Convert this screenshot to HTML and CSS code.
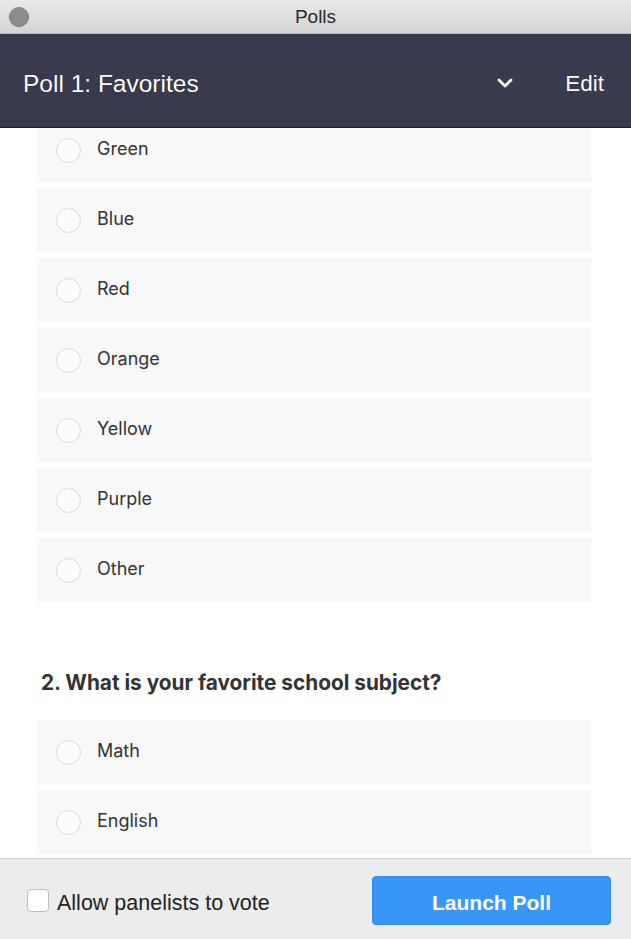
FILE: index.html
```html
<!DOCTYPE html>
<html lang="en">
<head>
<meta charset="utf-8">
<title>Polls</title>
<link rel="stylesheet" href="styles.css">
</head>
<body>
<div class="window">
  <div class="titlebar">
    <span class="dot"></span>
    <span class="wintitle">Polls</span>
  </div>
  <div class="header">
    <div class="poll-title">Poll 1: Favorites</div>
    <svg class="chev" width="18" height="12" viewBox="0 0 18 12"><polyline points="3,3 9,9 15,3" fill="none" stroke="#fff" stroke-width="2.8" stroke-linecap="round" stroke-linejoin="round"/></svg>
    <div class="edit">Edit</div>
  </div>
  <div class="content">
    <div class="list first">
      <div class="opt"><span class="radio"></span><span class="label">Green</span></div>
      <div class="opt"><span class="radio"></span><span class="label">Blue</span></div>
      <div class="opt"><span class="radio"></span><span class="label">Red</span></div>
      <div class="opt"><span class="radio"></span><span class="label">Orange</span></div>
      <div class="opt"><span class="radio"></span><span class="label">Yellow</span></div>
      <div class="opt"><span class="radio"></span><span class="label">Purple</span></div>
      <div class="opt"><span class="radio"></span><span class="label">Other</span></div>
    </div>
    <div class="question">2. What is your favorite school subject?</div>
    <div class="list">
      <div class="opt"><span class="radio"></span><span class="label">Math</span></div>
      <div class="opt"><span class="radio"></span><span class="label">English</span></div>
    </div>
  </div>
  <div class="footer">
    <div class="allow"><span class="checkbox"></span><span class="allow-text">Allow panelists to vote</span></div>
    <button class="launch">Launch Poll</button>
  </div>
</div>
</body>
</html>
```

FILE: styles.css
```css
* { box-sizing: border-box; }
html, body { margin: 0; padding: 0; }
body {
  font-family: Inter, "Liberation Sans", Arial, sans-serif;
  background: #fff;
}
.window {
  width: 631px;
  height: 939px;
  display: flex;
  flex-direction: column;
  overflow: hidden;
}
.titlebar {
  height: 34px;
  flex: none;
  display: flex;
  align-items: center;
  justify-content: center;
  position: relative;
  background: linear-gradient(#e9e9e9, #d4d4d4);
  border-bottom: 1px solid #b9b9b9;
}
.dot {
  position: absolute;
  left: 9px;
  top: 7px;
  width: 20px;
  height: 20px;
  border-radius: 50%;
  background: #8c8c8c;
  border: 1px solid #7a7a7a;
}
.wintitle {
  font-family: "Liberation Sans", Arial, sans-serif;
  font-size: 19px;
  color: #2a2a2a;
  padding-top: 1px;
}
.header {
  height: 94px;
  flex: none;
  background: #3a3a4e;
  border-bottom: 1px solid #1c1c24;
  display: flex;
  align-items: center;
  padding: 7px 27px 0 23px;
  color: #fff;
}
.poll-title {
  font-family: "Liberation Sans", Arial, sans-serif;
  font-size: 24.5px;
  flex: 1;
  text-shadow: 0 0 1px rgba(0,0,0,0.6);
}
.chev { margin-right: 51px; margin-top: -2px; }
.edit {
  font-family: "Liberation Sans", Arial, sans-serif;
  font-size: 22.5px;
  text-shadow: 0 0 1px rgba(0,0,0,0.6);
}
.content {
  flex: 1;
  overflow: hidden;
  padding: 0 40px 0 37px;
}
.list {
  display: flex;
  flex-direction: column;
  gap: 6px;
}
.list.first { margin-top: -10px; }
.opt {
  height: 64px;
  flex: none;
  background: #f8f8f8;
  display: flex;
  align-items: center;
  padding-left: 19px;
}
.radio {
  width: 25px;
  height: 25px;
  border-radius: 50%;
  border: 1px solid #d9d9d9;
  background: #fcfcfc;
  margin-right: 16px;
  flex: none;
}
.label {
  font-size: 18px;
  color: #333;
  padding-bottom: 4px;
}
.question {
  margin: 69px 0 25px 4px;
  height: 24px;
  line-height: 24px;
  font-size: 20.8px;
  font-weight: 700;
  color: #333;
}
.footer {
  height: 81px;
  flex: none;
  background: #ececec;
  border-top: 1px solid #d0d0d0;
  display: flex;
  align-items: center;
  justify-content: space-between;
  padding: 2px 20px 0 27px;
}
.allow {
  display: flex;
  align-items: center;
  font-family: "Liberation Sans", Arial, sans-serif;
  font-size: 21.5px;
  color: #222;
}
.allow-text { padding-top: 7px; }
.checkbox {
  width: 22px;
  height: 23px;
  border: 1px solid #bdbdbd;
  border-radius: 4px;
  background: #fff;
  margin-right: 8px;
  flex: none;
}
.launch {
  width: 239px;
  height: 49px;
  border: 1px solid #2f88ef;
  border-radius: 4px;
  background: #3896f9;
  color: #fff;
  font-family: "Liberation Sans", Arial, sans-serif;
  font-weight: 700;
  font-size: 21px;
  padding: 6px 0 0 0;
}
```
